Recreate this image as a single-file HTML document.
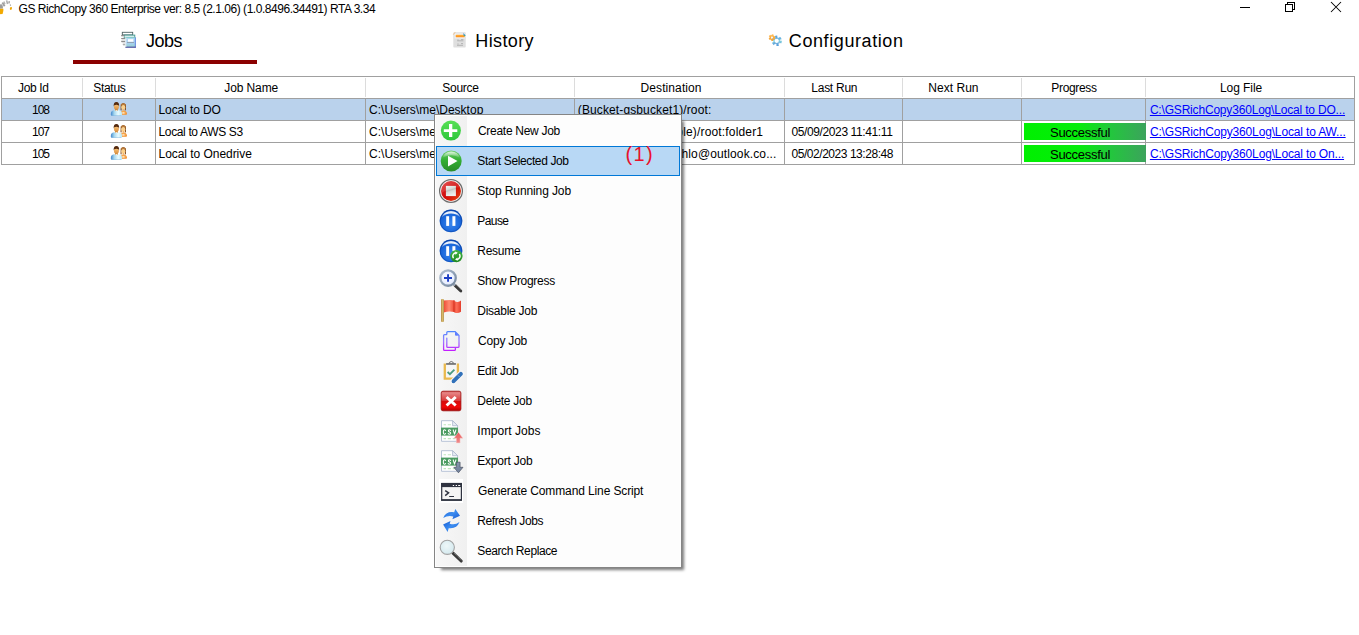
<!DOCTYPE html>
<html>
<head>
<meta charset="utf-8">
<title>GS RichCopy 360 Enterprise</title>
<style>
html,body{margin:0;padding:0;}
body{width:1359px;height:635px;overflow:hidden;background:#fff;position:relative;
  font-family:"Liberation Sans",sans-serif;font-size:12px;color:#000;}
.a{position:absolute;}
.t{position:absolute;white-space:nowrap;line-height:1;}
svg{position:absolute;overflow:visible;}
#ul{left:73px;top:60px;width:184px;height:4px;background:#8b0000;}
#grid{left:1px;top:76px;width:1354px;height:89px;}
.hl{position:absolute;background:#a0a0a0;height:1px;left:0;width:1354px;}
.vl{position:absolute;background:#a0a0a0;width:1px;top:22px;height:67px;}
.vh{position:absolute;background:#dcdcdc;width:1px;top:2px;height:19px;}
#sel{left:2px;top:99px;width:1352px;height:21px;background:#bad2ec;}
.pg{position:absolute;left:1024px;width:122px;height:17px;background:linear-gradient(90deg,#00f000 0%,#06ec0c 45%,#22c83c 70%,#3ca35c 100%);}
#shadow{left:440.6px;top:120.6px;width:243px;height:449px;background:rgba(0,0,0,.52);filter:blur(1.4px);}
#menu{left:434px;top:114px;width:246px;height:452px;background:#fdfdfd;border:1px solid #858585;}
#gut{left:1px;top:1px;width:31px;height:450px;background:linear-gradient(90deg,#f7f7f7 0%,#f4f4f4 45%,#f0f0f0 100%);}
#msel{left:1px;top:31px;width:242px;height:28px;background:#b8d8f5;border:1px solid #0078d7;}
</style>
</head>
<body>
<!-- title bar -->
<svg style="left:0;top:0" width="16" height="18" viewBox="0 0 16 18">
<defs><filter id="bl1" x="-30%" y="-30%" width="160%" height="160%"><feGaussianBlur stdDeviation="0.35"/></filter></defs>
<g filter="url(#bl1)">
<path d="M-1 4.4 L1.6 4.2 Q3.2 5 3 8.6 L-1 8.8 Z" fill="#9c9c9c"/>
<path d="M-1 8.8 L3.4 8.7 Q3.6 11.5 2.6 14 L-1 14.2 Z" fill="#f2a900"/>
<path d="M2.4 2.6 L4.6 6.2" stroke="#a0a0a0" stroke-width="1.9" fill="none"/>
<path d="M3.9 1.6 L5.0 4.2" stroke="#b4b4b4" stroke-width="1.4" fill="none"/>
<path d="M6.6 0.4 L7.6 4" stroke="#adadad" stroke-width="1.6" fill="none"/>
<path d="M9.3 1.2 L9.0 3.4" stroke="#a6a6a6" stroke-width="1.5" fill="none"/>
<path d="M10.3 4.4 L10.6 5.8" stroke="#b0b0b0" stroke-width="1.2" fill="none"/>
<ellipse cx="10.9" cy="8.4" rx="1" ry="1.5" fill="#eda500" transform="rotate(18 10.9 8.4)"/>
</g>
</svg>
<svg style="left:1230px;top:0" width="129" height="20" viewBox="1230 0 129 20" shape-rendering="crispEdges">
<rect x="1240" y="7" width="10" height="1" fill="#000"/>
<g fill="none" stroke="#000" stroke-width="1">
<rect x="1285.5" y="4.5" width="7" height="7"/>
<path d="M1287.5 4.5 V2.5 H1294.5 V9.5 H1292.5"/>
</g>
<g shape-rendering="geometricPrecision" stroke="#000" stroke-width="1.05" fill="none">
<path d="M1331 2 L1341 12 M1341 2 L1331 12"/>
</g>
</svg>
<!-- tab underline -->
<div class="a" id="ul"></div>
<svg style="left:118px;top:30px" width="22" height="20" viewBox="118 30 22 20">
<defs>
<filter id="bl2" x="-20%" y="-20%" width="140%" height="140%"><feGaussianBlur stdDeviation="0.3"/></filter>
<linearGradient id="gJob" x1="0" y1="0" x2="0" y2="1"><stop offset="0" stop-color="#b6dcf4"/><stop offset=".5" stop-color="#a9d0f6"/><stop offset="1" stop-color="#98d4cc"/></linearGradient>
</defs>
<g filter="url(#bl2)">
<rect x="122.3" y="32.3" width="10.4" height="2.6" fill="#fff" stroke="#4d6264" stroke-width="0.9"/>
<rect x="124.2" y="35.1" width="10.6" height="3" fill="#d6ecec" stroke="#3f968e" stroke-width="0.9"/>
<g stroke="#8d8d8d" stroke-width="1.1"><path d="M121.2 35.6 H124.4 M121.2 38.5 H125.4 M121.2 41.4 H125.4 M122.8 44.3 H125.4"/></g>
<g stroke="#dcdcdc" stroke-width="0.9"><path d="M121.6 36.7 H124.4 M121.6 39.6 H125.4 M121.6 42.5 H125.4 M123 45.4 H125.4"/></g>
<rect x="125.6" y="37.3" width="10" height="10.2" fill="url(#gJob)"/>
<rect x="125.6" y="37.2" width="10" height="0.9" fill="#7cc8c0"/>
<rect x="134.8" y="37.4" width="1.1" height="10" fill="#6a8fe0"/>
<rect x="125.4" y="46.6" width="10.5" height="1.2" fill="#5452a4"/>
<rect x="125.4" y="37.6" width="0.9" height="9.4" fill="#e9eef0"/>
<rect x="128" y="39.2" width="5.3" height="2.5" fill="#fff"/>
<rect x="127" y="42" width="7" height="0.7" fill="#8a8f98"/>
</g>
</svg>
<svg style="left:450px;top:30px" width="20" height="20" viewBox="450 30 20 20">
<defs><filter id="bl3" x="-20%" y="-20%" width="140%" height="140%"><feGaussianBlur stdDeviation="0.45"/></filter>
<linearGradient id="gHis" x1="0" y1="0" x2="0" y2="1"><stop offset="0" stop-color="#ffb13c"/><stop offset="1" stop-color="#ff8c14"/></linearGradient></defs>
<g filter="url(#bl3)">
<rect x="453.3" y="32.2" width="12.4" height="15.4" rx="0.8" fill="#dfdfdf"/>
<rect x="454.6" y="33.4" width="10.4" height="5.2" fill="#f1f1f1"/>
<rect x="455.7" y="34.8" width="9" height="2.5" rx="0.6" fill="url(#gHis)"/>
<path d="M453.3 34.6 L455.2 32.2" stroke="#f7b86c" stroke-width="0.8"/>
<path d="M463.4 32.9 L465.6 35.6 L463.6 35.8 Z" fill="#2d8fd8"/>
<path d="M464.2 35.1 L465.7 35.5 L464.2 36.4 Z" fill="#35b07a"/>
<g stroke="#a8a8a8" stroke-width="0.8"><path d="M458 39.4 V40.6 M457.2 40.8 H463.4 M461 39.6 H463.4 M458 43.4 V44.6 M457 45.3 H463 M461 43.6 H463"/></g>
</g>
</svg>
<svg style="left:765px;top:31px" width="20" height="18" viewBox="765 31 20 18">
<defs><filter id="bl4" x="-20%" y="-20%" width="140%" height="140%"><feGaussianBlur stdDeviation="0.45"/></filter>
<linearGradient id="gGb" x1="0" y1="0" x2="0" y2="1"><stop offset="0" stop-color="#2f8fd8"/><stop offset=".55" stop-color="#5cc2d2"/><stop offset="1" stop-color="#2f86d0"/></linearGradient>
<linearGradient id="gGo" x1="0" y1="0" x2="0" y2="1"><stop offset="0" stop-color="#ffa41c"/><stop offset="1" stop-color="#ef8a00"/></linearGradient></defs>
<g filter="url(#bl4)" opacity=".78">
<circle cx="776.7" cy="40.8" r="3.8" fill="none" stroke="url(#gGb)" stroke-width="2.8" stroke-dasharray="2.1 1.88"/>
<circle cx="776.7" cy="40.8" r="2.8" fill="none" stroke="url(#gGb)" stroke-width="1.4" opacity=".8"/>
<circle cx="772" cy="37.6" r="2.35" fill="none" stroke="url(#gGo)" stroke-width="2" stroke-dasharray="1.45 1"/>
<circle cx="772" cy="37.6" r="1.8" fill="none" stroke="url(#gGo)" stroke-width="1.4"/>
<circle cx="772" cy="37.6" r="0.9" fill="#e4eefc"/>
</g>
</svg>
<!-- grid -->
<div class="a" id="sel"></div>
<div class="a" id="grid">
<div class="hl" style="top:0px"></div>
<div class="hl" style="top:22px"></div>
<div class="hl" style="top:44px"></div>
<div class="hl" style="top:66px"></div>
<div class="hl" style="top:88px"></div>
<div class="vl" style="left:0px;top:0;height:89px"></div>
<div class="vh" style="left:81px"></div>
<div class="vl" style="left:81px"></div>
<div class="vh" style="left:154px"></div>
<div class="vl" style="left:154px"></div>
<div class="vh" style="left:364px"></div>
<div class="vl" style="left:364px"></div>
<div class="vh" style="left:573px"></div>
<div class="vl" style="left:573px"></div>
<div class="vh" style="left:783px"></div>
<div class="vl" style="left:783px"></div>
<div class="vh" style="left:901px"></div>
<div class="vl" style="left:901px"></div>
<div class="vh" style="left:1020px"></div>
<div class="vl" style="left:1020px"></div>
<div class="vh" style="left:1144px"></div>
<div class="vl" style="left:1144px"></div>
<div class="vl" style="left:1353px;top:0;height:89px"></div>
</div>
<div class="pg" style="top:123px"></div>
<div class="pg" style="top:145px"></div>
<svg style="left:108px;top:99px" width="22" height="66" viewBox="108 99 22 66">
<defs>
<filter id="bl5" x="-20%" y="-20%" width="140%" height="140%"><feGaussianBlur stdDeviation="0.35"/></filter>
<linearGradient id="gMan" x1="0" y1="0" x2="1" y2="0"><stop offset="0" stop-color="#3f86cc"/><stop offset=".3" stop-color="#a4d6ee"/><stop offset=".65" stop-color="#e8fbff"/><stop offset="1" stop-color="#b8e6f6"/></linearGradient>
<radialGradient id="gWom" cx=".45" cy=".55" r=".6"><stop offset="0" stop-color="#fff1dc"/><stop offset=".5" stop-color="#f6a850"/><stop offset="1" stop-color="#ee8420"/></radialGradient>
<linearGradient id="gFace" x1="0" y1="0" x2="0" y2="1"><stop offset="0" stop-color="#fbc678"/><stop offset="1" stop-color="#d88f42"/></linearGradient>
<g id="ppl" filter="url(#bl5)">
<path d="M120.4 114.9 Q120 110.8 123.3 110.4 Q126.9 110.8 127 113.8 Q127 114.8 126 114.8 Z" fill="url(#gWom)"/>
<path d="M120.7 104.6 Q123.3 101.6 125.9 104.6 L126 110.2 L124.8 110.6 L124.9 106 L121.6 106 L121.6 110.6 L120.5 110.2 Z" fill="#8a5222"/>
<path d="M121 104.6 Q123.3 102 125.6 104.6 L125.4 105.6 L121.2 105.6 Z" fill="#b87a3a"/>
<ellipse cx="123.3" cy="107.3" rx="1.9" ry="2.3" fill="#fbd089"/>
<rect x="122.5" y="109" width="1.6" height="1.8" fill="#f3b56a"/>
<path d="M111.6 115.7 Q110.8 115.6 110.8 114.6 Q110.6 110.6 114 110.2 L118.8 110.2 Q122.2 110.6 122.1 114.6 Q122.1 115.6 121.3 115.7 Z" fill="url(#gMan)"/><path d="M111.4 115.4 H121.4" stroke="#6aa6d6" stroke-width=".6" opacity=".7"/>
<rect x="115" y="108.4" width="2.8" height="2.4" fill="#c98a3e"/>
<path d="M115 110.2 L116.4 111.2 L117.8 110.2 Z" fill="#fff"/>
<ellipse cx="116.4" cy="106.8" rx="2.5" ry="2.9" fill="url(#gFace)"/>
<path d="M113.7 106.6 Q113.2 102.2 116.4 102 Q119.6 102.2 119.1 106.6 L118.5 105.2 Q116.4 104.2 114.3 105.2 Z" fill="#552a0c"/>
</g>
</defs>
<use href="#ppl"/>
<use href="#ppl" y="22"/>
<use href="#ppl" y="44"/>
</svg>
<div class="t" id="title" style="left:18.60px;top:3px;font-size:12px;letter-spacing:-0.465px;">GS RichCopy 360 Enterprise ver: 8.5 (2.1.06) (1.0.8496.34491) RTA 3.34</div>
<div class="t" id="tab1" style="left:145.90px;top:32px;font-size:18px;letter-spacing:-0.467px;">Jobs</div>
<div class="t" id="tab2" style="left:475.30px;top:32px;font-size:18px;letter-spacing:0.367px;">History</div>
<div class="t" id="tab3" style="left:788.80px;top:32px;font-size:18px;letter-spacing:0.592px;">Configuration</div>
<div class="t" id="h0" style="left:18.00px;top:82px;font-size:12px;letter-spacing:-0.340px;">Job Id</div>
<div class="t" id="h1" style="left:93.20px;top:82px;font-size:12px;letter-spacing:-0.280px;">Status</div>
<div class="t" id="h2" style="left:224.30px;top:82px;font-size:12px;letter-spacing:-0.114px;">Job Name</div>
<div class="t" id="h3" style="left:442.30px;top:82px;font-size:12px;letter-spacing:-0.260px;">Source</div>
<div class="t" id="h4" style="left:640.50px;top:82px;font-size:12px;letter-spacing:0.100px;">Destination</div>
<div class="t" id="h5" style="left:811.30px;top:82px;font-size:12px;letter-spacing:-0.257px;">Last Run</div>
<div class="t" id="h6" style="left:928.30px;top:82px;font-size:12px;letter-spacing:0.029px;">Next Run</div>
<div class="t" id="h7" style="left:1051.30px;top:82px;font-size:12px;letter-spacing:-0.329px;">Progress</div>
<div class="t" id="h8" style="left:1220.00px;top:82px;font-size:12px;letter-spacing:-0.071px;">Log File</div>
<div class="t" id="id0" style="left:32.00px;top:104px;font-size:12px;letter-spacing:-1.000px;">108</div>
<div class="t" id="id1" style="left:32.00px;top:126px;font-size:12px;letter-spacing:-1.000px;">107</div>
<div class="t" id="id2" style="left:32.00px;top:148px;font-size:12px;letter-spacing:-1.000px;">105</div>
<div class="t" id="n0" style="left:158.50px;top:104px;font-size:12px;letter-spacing:-0.100px;">Local to DO</div>
<div class="t" id="n1" style="left:158.50px;top:126px;font-size:12px;letter-spacing:-0.357px;">Local to AWS S3</div>
<div class="t" id="n2" style="left:158.50px;top:148px;font-size:12px;letter-spacing:-0.044px;">Local to Onedrive</div>
<div class="t" id="s0" style="left:369.10px;top:104px;font-size:12px;letter-spacing:0.011px;">C:\Users\me\Desktop</div>
<div class="t" id="s1" style="left:369.10px;top:126px;font-size:12px;letter-spacing:0.011px;">C:\Users\me\Desktop</div>
<div class="t" id="s2" style="left:369.10px;top:148px;font-size:12px;letter-spacing:0.011px;">C:\Users\me\Desktop</div>
<div class="t" id="d0" style="left:577.80px;top:104px;font-size:12px;letter-spacing:0.117px;">(Bucket-gsbucket1)/root:</div>
<div class="t" id="d1" style="left:676.30px;top:126px;font-size:12px;letter-spacing:0.169px;">ple)/root:folder1</div>
<div class="t" id="d2" style="left:681.50px;top:148px;font-size:12px;letter-spacing:0.125px;">hlo@outlook.co...</div>
<div class="t" id="l1" style="left:791.50px;top:126px;font-size:12px;letter-spacing:-0.389px;">05/09/2023 11:41:11</div>
<div class="t" id="l2" style="left:791.50px;top:148px;font-size:12px;letter-spacing:-0.456px;">05/02/2023 13:28:48</div>
<div class="t" id="k0" style="left:1149.90px;top:104px;font-size:12px;letter-spacing:-0.185px;color:#0000ff;text-decoration:underline;">C:\GSRichCopy360Log\Local to DO...</div>
<div class="t" id="k1" style="left:1149.90px;top:126px;font-size:12px;letter-spacing:-0.155px;color:#0000ff;text-decoration:underline;">C:\GSRichCopy360Log\Local to AW...</div>
<div class="t" id="k2" style="left:1149.90px;top:148px;font-size:12px;letter-spacing:-0.155px;color:#0000ff;text-decoration:underline;">C:\GSRichCopy360Log\Local to On...</div>
<div class="t" id="p1" style="left:1050.00px;top:126px;font-size:13px;letter-spacing:-0.278px;">Successful</div>
<div class="t" id="p2" style="left:1050.00px;top:148px;font-size:13px;letter-spacing:-0.278px;">Successful</div>
<!-- context menu -->
<div class="a" id="shadow"></div>
<div class="a" id="menu">
<div class="a" id="gut"></div>
<div class="a" id="msel"></div>
<svg style="left:0;top:0" width="40" height="452" viewBox="435 115 40 452">
<defs>
<linearGradient id="gCr" x1="0" y1="0" x2="0" y2="1"><stop offset="0" stop-color="#58e056"/><stop offset="1" stop-color="#2cc63a"/></linearGradient>
<linearGradient id="gSt" x1="0" y1="0" x2="0" y2="1"><stop offset="0" stop-color="#6fcf6f"/><stop offset=".45" stop-color="#34b034"/><stop offset="1" stop-color="#2a8c2a"/></linearGradient>
<linearGradient id="gStH" x1="0" y1="0" x2="0" y2="1"><stop offset="0" stop-color="#fff" stop-opacity=".8"/><stop offset="1" stop-color="#fff" stop-opacity="0"/></linearGradient>
<linearGradient id="gRed" x1="0" y1="0" x2="1" y2="1"><stop offset="0" stop-color="#e23a3a"/><stop offset=".5" stop-color="#cf0a0a"/><stop offset="1" stop-color="#ea4a10"/></linearGradient>
<linearGradient id="gSil" x1="0" y1="0" x2=".3" y2="1"><stop offset="0" stop-color="#f4fbf8"/><stop offset=".38" stop-color="#d6d9d6"/><stop offset=".5" stop-color="#bfc0be"/><stop offset=".62" stop-color="#d8d9d6"/><stop offset="1" stop-color="#eef0ee"/></linearGradient>
<radialGradient id="gBlu" cx=".5" cy=".62" r=".62"><stop offset="0" stop-color="#3a86ee"/><stop offset=".7" stop-color="#1966da"/><stop offset="1" stop-color="#0a49b4"/></radialGradient>
<linearGradient id="gBluH" x1="0" y1="0" x2="0" y2="1"><stop offset="0" stop-color="#fff" stop-opacity=".8"/><stop offset=".35" stop-color="#fff" stop-opacity=".95"/><stop offset="1" stop-color="#fff" stop-opacity=".15"/></linearGradient>
<linearGradient id="gGrn2" x1="0" y1="0" x2="0" y2="1"><stop offset="0" stop-color="#45b545"/><stop offset="1" stop-color="#1f8a1f"/></linearGradient>
<radialGradient id="gLens" cx=".45" cy=".4" r=".6"><stop offset="0" stop-color="#ffffff"/><stop offset="1" stop-color="#dfe8ff"/></radialGradient>
<linearGradient id="gRing" x1="0" y1="0" x2="1" y2="1"><stop offset="0" stop-color="#b4c2d3"/><stop offset=".5" stop-color="#8fa1b6"/><stop offset="1" stop-color="#74859a"/></linearGradient>
<linearGradient id="gFlag" x1="0" y1="0" x2="1" y2="0"><stop offset="0" stop-color="#ee4e36"/><stop offset=".5" stop-color="#ff8a72"/><stop offset="1" stop-color="#ee4a34"/></linearGradient>
<linearGradient id="gFlag2" x1="0" y1="0" x2="1" y2="0"><stop offset="0" stop-color="#e8412c"/><stop offset=".45" stop-color="#fb6e58"/><stop offset="1" stop-color="#e43c2a"/></linearGradient>
<linearGradient id="gPole" x1="0" y1="0" x2="1" y2="0"><stop offset="0" stop-color="#a8782e"/><stop offset=".45" stop-color="#dcc070"/><stop offset="1" stop-color="#a88030"/></linearGradient>
<linearGradient id="gCopy" gradientUnits="userSpaceOnUse" x1="0" y1="331" x2="0" y2="351"><stop offset="0" stop-color="#4a86ff"/><stop offset=".5" stop-color="#9a7cff"/><stop offset="1" stop-color="#c418ff"/></linearGradient>
<filter id="bm" x="-20%" y="-20%" width="140%" height="140%"><feGaussianBlur stdDeviation="0.3"/></filter>
</defs>
<!-- 0 create -->
<circle cx="450.9" cy="130.6" r="10" fill="url(#gCr)"/>
<path d="M443.8 129.2 H449 V124 H452.3 V129.2 H457.3 V132.1 H452.3 V137 H449 V132.1 H443.8 Z" fill="#fff"/>
<!-- 2 stop -->
<circle cx="451" cy="191" r="11.4" fill="#fdfdfd" stroke="#6c6c6c" stroke-width="1.25"/>
<circle cx="451" cy="191" r="10" fill="url(#gRed)"/>
<path d="M441.3 189 A10 10 0 0 1 460.4 187.6 Q451 186.4 441.3 193 Z" fill="#fff" opacity=".12"/>
<rect x="445.9" y="185.9" width="10" height="10.2" fill="url(#gSil)"/>
<!-- 3 pause -->
<g id="pz">
<circle cx="451" cy="220.9" r="11.3" fill="url(#gBlu)"/>
<path d="M441.7 217.5 A9.9 9.9 0 0 1 460.3 217.5 A13 13 0 0 0 441.7 217.5 Z" fill="url(#gBluH)"/>
<circle cx="451" cy="220.9" r="10.8" fill="none" stroke="#0a3f9e" stroke-width=".9" opacity=".55"/>
</g>
<rect x="446.2" y="216.2" width="2.9" height="9.7" fill="#fff"/>
<rect x="452.4" y="216.2" width="3" height="9.7" fill="#fff"/>
<!-- 4 resume -->
<use href="#pz" y="30"/>
<rect x="446.2" y="246.2" width="2.9" height="9.7" fill="#fff"/>
<rect x="452.4" y="246.2" width="3" height="5" fill="#fff"/>
<circle cx="456.4" cy="256.1" r="6.2" fill="url(#gGrn2)"/>
<g transform="translate(-.4 -.2)"><g fill="none" stroke="#fff" stroke-width="1.5" stroke-linecap="round">
<path d="M453.6 257.8 A3.4 3.4 0 0 1 456.2 252.9"/>
<path d="M460 254.8 A3.4 3.4 0 0 1 457.4 259.7"/>
</g>
<path d="M455.4 251.6 L458.2 253 L455.8 254.9 Z" fill="#fff"/>
<path d="M458.2 261 L455.4 259.6 L457.8 257.7 Z" fill="#fff"/></g>
<!-- 5 show progress -->
<path d="M455 285.4 L460.8 291" stroke="#383838" stroke-width="2.9" stroke-linecap="round"/>
<path d="M455.4 284.4 L461.2 290" stroke="#8a8a8a" stroke-width=".8" stroke-dasharray=".8 .8"/>
<path d="M453 283.2 L455.2 285.4" stroke="#9eaabb" stroke-width="2.2"/>
<circle cx="448.05" cy="278.05" r="7.7" fill="url(#gLens)" stroke="url(#gRing)" stroke-width="2.3"/>
<path d="M444 277.1 H447.1 V274.3 H449 V277.1 H452 V279 H449 V281.8 H447.1 V279 H444 Z" fill="#1d3fc4"/>
<!-- 6 flag -->
<path d="M443.8 300.6 Q449 299.6 454.4 300.4 L454.4 312 Q449 310.6 443.8 312.4 Z" fill="url(#gFlag)"/>
<path d="M454.4 300.6 Q455 302.2 457.6 302 Q459.6 301.8 461 300.4 L461 311.8 Q458.6 313.4 456 313 Q454.6 312.8 453.2 311.6 Z" fill="url(#gFlag2)"/>
<path d="M453.2 300.3 L454.8 300.6 L454.8 312.2 L453.2 311.6 Z" fill="#d93a28" opacity=".75"/>
<rect x="441.1" y="299.1" width="2.7" height="22.8" rx=".9" fill="url(#gPole)"/>
<!-- 7 copy -->
<g fill="none" stroke="url(#gCopy)" stroke-width="1.3" stroke-linejoin="round" stroke-linecap="round">
<path d="M446.8 334 V332.6 Q446.8 331.6 447.8 331.6 H455.2 L459 335.4 V346.4 Q459 347.4 458 347.4 H447.8 Q446.8 347.4 446.8 346.4 V338.2"/>
<path d="M446.6 334.6 H444.6 Q443.6 334.6 443.6 335.6 V349.4 Q443.6 350.4 444.6 350.4 H454.4 Q455.4 350.4 455.4 349.4 V348"/>
</g>
<path d="M455 331.6 L459 335.6 L456 335.8 Q455 335.8 455 334.8 Z" fill="#5b7cff"/>
<!-- 1 start -->
<circle cx="451.2" cy="161" r="10.5" fill="url(#gSt)"/>
<path d="M442.4 158 A9.2 9.2 0 0 1 460 158 Q451.2 152.6 442.4 158 Z" fill="url(#gStH)"/>
<path d="M448 155.7 L457.5 161.1 L448 166.5 Z" fill="#fff"/>
<!-- 8 edit -->
<rect x="445" y="364" width="13" height="15" fill="#f6f6f6"/><path d="M444.8 363.6 V378.6 H457.9 V363.6" fill="none" stroke="#e9b94e" stroke-width="2.3"/>
<rect x="446.1" y="363.1" width="9.8" height="1.7" fill="#6e6e6e"/>
<path d="M449.4 363.4 V362.4 Q451.3 360.6 453.2 362.4 V363.4" fill="none" stroke="#6e6e6e" stroke-width="1"/>
<path d="M447.6 372 L449.9 374.2 L454.4 369.6" fill="none" stroke="#4b9b80" stroke-width="1.8"/>
<path d="M461.4 373.4 L452.6 382.2" stroke="#f6f6f6" stroke-width="6" stroke-linecap="round"/>
<path d="M460.9 373.9 L453.6 381.2" stroke="#3272ba" stroke-width="3.9" stroke-linecap="round"/>
<path d="M451.9 382.9 L452.4 380 L454.8 382.4 Z" fill="#3272ba"/>
<path d="M458 375.4 L459.6 377" stroke="#9fc0e6" stroke-width=".7"/>
<!-- 9 delete -->
<defs>
<linearGradient id="gDel" x1="0" y1="0" x2="0" y2="1"><stop offset="0" stop-color="#d04a4a"/><stop offset=".08" stop-color="#e68686"/><stop offset=".48" stop-color="#d93a3a"/><stop offset=".52" stop-color="#d60c0c"/><stop offset=".8" stop-color="#f20808"/><stop offset="1" stop-color="#b30000"/></linearGradient>
<linearGradient id="gArrU" x1="0" y1="0" x2="0" y2="1"><stop offset="0" stop-color="#e85a5a"/><stop offset="1" stop-color="#f08a8a"/></linearGradient>
<linearGradient id="gArrD" x1="0" y1="0" x2="0" y2="1"><stop offset="0" stop-color="#8896ae"/><stop offset="1" stop-color="#6f7f9a"/></linearGradient>
<linearGradient id="gRef" x1="0" y1="0" x2="1" y2="1"><stop offset="0" stop-color="#1a5fd4"/><stop offset=".5" stop-color="#3b8cf0"/><stop offset="1" stop-color="#1a5ad0"/></linearGradient>
<radialGradient id="gLens2" cx=".45" cy=".4" r=".65"><stop offset="0" stop-color="#eef7f8"/><stop offset="1" stop-color="#d2e8ee"/></radialGradient>
<g id="csv">
<path d="M441.5 420.7 H452.6 L457.6 425.7 V441.3 H441.5 Z" fill="#fff" stroke="#b7c2d6" stroke-width="1"/>
<path d="M452.6 420.7 V425.7 H457.6 Z" fill="#e8edf5" stroke="#aab6cc" stroke-width=".8"/>
<g stroke="#bfe6bf" stroke-width="1.1"><path d="M443.6 424.8 H446 M447.8 424.8 H451 M443.6 438.6 H446 M447.8 438.6 H451 M452.8 438.6 H455.4"/></g>
<rect x="441" y="427.6" width="17" height="8" fill="#4b9b62"/>
<g fill="none" stroke="#fff" stroke-width="1.05" stroke-linecap="round" stroke-linejoin="round">
<path d="M445.6 430.5 Q445 429.7 444.3 429.8 Q443.3 430 443.3 432 Q443.3 434 444.3 434.2 Q445 434.3 445.6 433.5"/>
<path d="M450.6 430.4 Q450 429.7 449.3 429.8 Q448.3 430 448.4 430.9 Q448.5 431.7 449.5 432 Q450.7 432.4 450.7 433.2 Q450.6 434.2 449.5 434.2 Q448.7 434.2 448.2 433.6"/>
<path d="M453.2 429.9 L454.55 434.2 L455.9 429.9"/>
</g>
</g>
</defs>
<rect x="441.2" y="391.2" width="19.7" height="19.6" rx="1.8" fill="url(#gDel)" stroke="#9a0a0a" stroke-width=".8"/>
<path d="M446.6 397 L455.7 405.5 M455.7 397 L446.6 405.5" stroke="#fff" stroke-width="3" stroke-linecap="butt"/>
<!-- 10 import -->
<use href="#csv"/>
<path d="M458.45 432.2 L462.9 438.2 H460.1 V442.9 H456.3 V438.2 H453.9 Z" fill="url(#gArrU)" stroke="#f6d0d0" stroke-width=".5"/>
<!-- 11 export -->
<use href="#csv" y="30"/>
<path d="M456.3 462.2 H460.1 V467.3 H463 L458.45 472.8 L453.8 467.3 H456.3 Z" fill="url(#gArrD)" stroke="#3a4252" stroke-width=".6"/>
<!-- 12 terminal -->
<rect x="439" y="479" width="24" height="24" fill="#fff"/>
<rect x="441.7" y="483.5" width="19.7" height="16.6" fill="#f4f4f4" stroke="#2f3340" stroke-width="1.2"/>
<rect x="441.1" y="483" width="20.8" height="4.1" fill="#2f3340"/>
<rect x="441.1" y="499.2" width="20.8" height="1.6" fill="#2f3340"/>
<rect x="452.8" y="485" width="1.3" height="1" fill="#fff"/><rect x="455.7" y="485" width="1.3" height="1" fill="#fff"/><rect x="458.2" y="485" width="2" height="1" fill="#fff"/>
<path d="M445.2 490.6 L448.6 492.8 L445.2 495.6" fill="none" stroke="#2f3340" stroke-width="1.4"/>
<rect x="449.2" y="496" width="4.8" height="1" fill="#2f3340"/>
<!-- 13 refresh -->
<path d="M443.2 518 Q446 511 454.2 512.2 L455.3 508.9 L460 515.7 L452.4 519.2 L453.3 516.4 Q447.8 515 443.2 518 Z" fill="url(#gRef)"/>
<path d="M459.5 522.1 Q456.8 529.2 448.7 528.2 L447.6 531.9 L443.1 524.4 L450.5 520.9 L449.7 523.8 Q455 525.4 459.5 522.1 Z" fill="url(#gRef)"/>
<!-- 14 search -->
<path d="M453 553.2 L461.2 561" stroke="#3a3a3a" stroke-width="3.1" stroke-linecap="round"/>
<path d="M454 553 L461.6 560.2" stroke="#9a9a9a" stroke-width=".9" stroke-dasharray=".9 .9"/>
<circle cx="447.3" cy="547.3" r="7.1" fill="url(#gLens2)" stroke="#a2a2a2" stroke-width="1.1"/>
</svg>
<div class="t" id="m0" style="left:43.00px;top:10px;font-size:12px;letter-spacing:-0.292px;">Create New Job</div>
<div class="t" id="m1" style="left:42.30px;top:40px;font-size:12px;letter-spacing:-0.371px;">Start Selected Job</div>
<div class="t" id="m2" style="left:42.30px;top:70px;font-size:12px;letter-spacing:-0.107px;">Stop Running Job</div>
<div class="t" id="m3" style="left:42.30px;top:100px;font-size:12px;letter-spacing:-0.575px;">Pause</div>
<div class="t" id="m4" style="left:42.30px;top:130px;font-size:12px;letter-spacing:-0.260px;">Resume</div>
<div class="t" id="m5" style="left:42.30px;top:160px;font-size:12px;letter-spacing:-0.292px;">Show Progress</div>
<div class="t" id="m6" style="left:42.30px;top:190px;font-size:12px;letter-spacing:-0.260px;">Disable Job</div>
<div class="t" id="m7" style="left:43.00px;top:220px;font-size:12px;letter-spacing:-0.200px;">Copy Job</div>
<div class="t" id="m8" style="left:42.30px;top:250px;font-size:12px;letter-spacing:-0.271px;">Edit Job</div>
<div class="t" id="m9" style="left:42.30px;top:280px;font-size:12px;letter-spacing:-0.289px;">Delete Job</div>
<div class="t" id="m10" style="left:42.30px;top:310px;font-size:12px;letter-spacing:0.040px;">Import Jobs</div>
<div class="t" id="m11" style="left:42.30px;top:340px;font-size:12px;letter-spacing:-0.222px;">Export Job</div>
<div class="t" id="m12" style="left:43.00px;top:370px;font-size:12px;letter-spacing:-0.122px;">Generate Command Line Script</div>
<div class="t" id="m13" style="left:42.30px;top:400px;font-size:12px;letter-spacing:-0.418px;">Refresh Jobs</div>
<div class="t" id="m14" style="left:42.30px;top:430px;font-size:12px;letter-spacing:-0.400px;">Search Replace</div>
<div class="t" id="one" style="left:190.50px;top:29px;font-size:20px;letter-spacing:1.400px;color:#e8112d;">(1)</div>
</div>
</body>
</html>
